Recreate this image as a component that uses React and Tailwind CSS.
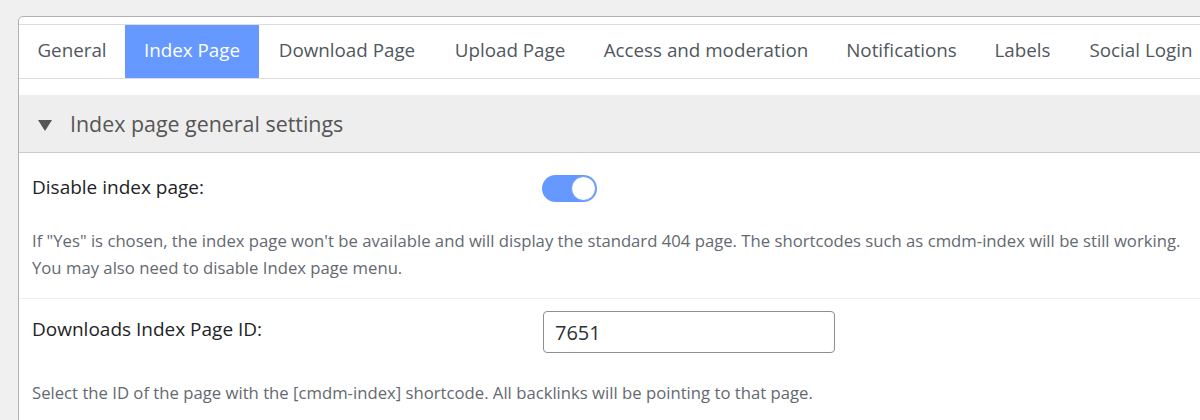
const TABS = [
  { label: 'General', w: 'w-[106px]' },
  { label: 'Index Page', w: 'w-[134px]', active: true },
  { label: 'Download Page', w: 'w-[176px]' },
  { label: 'Upload Page', w: 'w-[150px]' },
  { label: 'Access and moderation', w: 'w-[242px]' },
  { label: 'Notifications', w: 'w-[149px]' },
  { label: 'Labels', w: 'w-[93px]' },
  { label: 'Social Login', w: 'w-[144px]' },
];

function Toggle() {
  return (
    <div className="relative h-[27px] w-[55px] shrink-0 rounded-full bg-[#6699ff]">
      <span className="absolute right-[1px] top-[1px] h-[25px] w-[25px] rounded-full border border-[#6699ff] bg-white" />
    </div>
  );
}

export default function App() {
  return (
    <div className="h-[420px] w-[1200px] overflow-hidden bg-[#f0f0f0] pl-[18px] pt-[16px] font-['Open_Sans',sans-serif]">
      <div className="h-[500px] w-[1200px] rounded-tl-[5px] border border-[#b0b0b0] bg-white pt-[7px]">
        {/* tabs */}
        <div className="flex h-[55px] border-y border-[#dcdcdc]">
          {TABS.map((t) => (
            <div
              key={t.label}
              className={
                'flex shrink-0 items-center justify-center whitespace-nowrap pb-[2px] text-[18.8px] ' +
                t.w +
                (t.active ? ' bg-[#6699ff] text-white' : ' text-[#50575e]')
              }
            >
              {t.label}
            </div>
          ))}
        </div>

        {/* section header */}
        <div className="mt-[16px] flex h-[58px] items-center gap-[18px] border-b border-[#cccccc] bg-[#eeeeee] pl-[19px]">
          <svg width="14" height="11" viewBox="0 0 14 11" className="mt-[3px]">
            <polygon points="0,0 14,0 7,11" fill="#555555" />
          </svg>
          <span className="text-[21.4px] leading-[30px] text-[#555555]">Index page general settings</span>
        </div>

        {/* row 1 */}
        <div className="border-b border-[#eeeeee] px-[13px] pb-[17px] pt-[21px]">
          <div className="flex items-center">
            <div className="w-[510px] pb-[2px] text-[19px] leading-[27px] text-[#1d2327]">Disable index page:</div>
            <Toggle />
          </div>
          <p className="mt-[24px] w-[1160px] text-[16.7px] leading-[27px] text-[#646970]">
            If "Yes" is chosen, the index page won't be available and will display the standard 404 page. The shortcodes such as cmdm-index will be still working. You may also need to disable Index page menu.
          </p>
        </div>

        {/* row 2 */}
        <div className="px-[13px] pt-[12px]">
          <div className="flex items-center">
            <div className="w-[511px] pb-[6px] text-[19px] leading-[27px] text-[#1d2327]">Downloads Index Page ID:</div>
            <input
              readOnly
              value="7651"
              className="h-[42px] w-[292px] rounded-[4px] border border-[#8c8f94] px-[11px] text-[20px] text-[#2c3338] outline-none"
            />
          </div>
          <p className="mt-[26px] text-[16.7px] leading-[27px] text-[#646970]">
            Select the ID of the page with the [cmdm-index] shortcode. All backlinks will be pointing to that page.
          </p>
        </div>
      </div>
    </div>
  );
}
